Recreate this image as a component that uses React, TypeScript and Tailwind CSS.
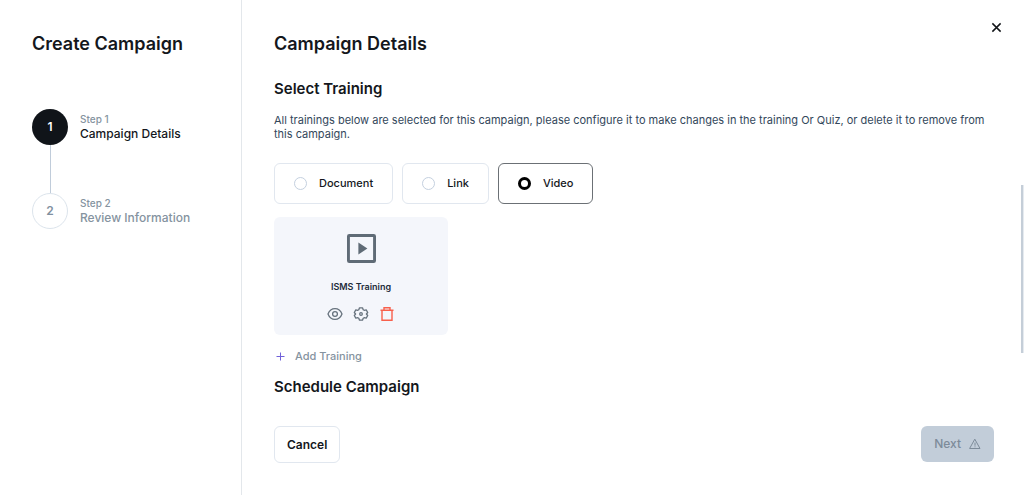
import { useState } from "react";

const steps = [
  { id: 1, label: "Step 1", title: "Campaign Details" },
  { id: 2, label: "Step 2", title: "Review Information" },
];

const kinds = ["Document", "Link", "Video"];

function VideoIcon() {
  return (
    <svg className="size-[29px]" viewBox="0 0 28 28" fill="none" aria-hidden="true">
      <rect x="1.4" y="1.4" width="25.2" height="25.2" rx="0.8" stroke="#5f6b76" strokeWidth="2.8" />
      <path d="M11 8.300v11.400l8.700-5.700z" fill="#5f6b76" />
    </svg>
  );
}

function EyeIcon() {
  return (
    <svg className="h-4 w-4" viewBox="0 0 16 16" fill="none" stroke="#66727d" strokeWidth="1.3" aria-hidden="true">
      <path d="M1 8C2.300 4.600 5 2.600 8 2.600s5.700 2 7 5.400c-1.300 3.400-4 5.400-7 5.400S2.300 11.400 1 8z" strokeLinejoin="round" />
      <circle cx="8" cy="8" r="2.400" />
    </svg>
  );
}

function GearIcon() {
  return (
    <svg className="h-4 w-4" viewBox="0 0 16 16" fill="none" stroke="#66727d" strokeWidth="1.300" strokeLinejoin="round" aria-hidden="true">
      <path d="M6.500 1.800h3l.7 1.900 1 .6 2-.4 1.500 2.600L13.400 8l1.300 1.500-1.500 2.600-2-.4-1 .6-.7 1.900h-3l-.7-1.900-1-.6-2 .4-1.500-2.600L2.600 8 1.300 6.500l1.500-2.600 2 .4 1-.6z" />
      <circle cx="8" cy="8" r="1.300" />
    </svg>
  );
}

function TrashIcon() {
  return (
    <svg className="h-4 w-4" viewBox="0 0 16 16" fill="none" stroke="#f8604c" strokeWidth="1.400" aria-hidden="true">
      <path d="M1.500 4.200h13M5 4.200V1.700h6v2.500M3 4.200v10.100h10V4.200" />
    </svg>
  );
}

export default function App() {
  const [kind, setKind] = useState("Video");

  return (
    <div className="flex min-h-screen bg-white font-['Inter',sans-serif] text-[#14171c]">
      <aside className="w-[242px] shrink-0 border-r border-[#e3e7eb] pl-8 pt-8">
        <h1 className="text-lg leading-6 font-semibold">Create Campaign</h1>
        <ol className="mt-[53px]">
          {steps.map((step, i) => (
            <li key={step.id} className="flex gap-3">
              <div className="flex flex-col items-center">
                <span
                  className={
                    i === 0
                      ? "flex size-9 items-center justify-center rounded-full bg-[#101419] text-xs font-semibold text-white"
                      : "flex size-9 items-center justify-center rounded-full border border-[#dce4ec] text-xs font-semibold text-[#8190a0]"
                  }
                >
                  {step.id}
                </span>
                {i === 0 && <span className="h-12 w-px bg-[#c0ccda]" />}
              </div>
              <div className="pt-1">
                <p className="text-[10px] leading-3 font-medium text-[#8593a0]">{step.label}</p>
                <p className={i === 0 ? "text-xs leading-[18px] font-medium" : "text-xs leading-[18px] font-medium text-[#8593a0]"}>
                  {step.title}
                </p>
              </div>
            </li>
          ))}
        </ol>
      </aside>

      <main className="relative flex min-w-0 flex-1 flex-col pl-8 pt-8 pr-[30px]">
        <header className="flex items-start justify-between">
          <h2 className="text-lg leading-6 font-semibold">Campaign Details</h2>
          <button type="button" aria-label="Close" className="-mt-[13px] -mr-[10px] flex size-4 items-center justify-center">
            <svg className="size-[11px]" viewBox="0 0 12 12" stroke="#111418" strokeWidth="1.600" aria-hidden="true">
              <path d="M1.500 1.500l9 9M10.500 1.500l-9 9" />
            </svg>
          </button>
        </header>

        <section className="mt-[23px]">
          <h3 className="text-[15px] leading-5 font-semibold">Select Training</h3>
          <p className="mt-[14px] text-[11px] leading-[14px] text-[#33475b]">
            All trainings below are selected for this campaign, please configure it to make changes in the training Or
            Quiz, or delete it to remove from this campaign.
          </p>

          <div className="mt-[22px] flex gap-[9px]" role="radiogroup" aria-label="Training type">
            {kinds.map((name) => (
              <label
                key={name}
                className="flex h-[41px] items-center gap-3 rounded-md border border-[#e1e7ef] px-[19px] text-[11px] font-medium has-checked:border-[#6b7075]"
              >
                <input
                  type="radio"
                  name="kind"
                  value={name}
                  checked={kind === name}
                  onChange={() => setKind(name)}
                  className="size-[13px] appearance-none rounded-full border border-[#c4d0df] bg-white checked:border-3 checked:border-black"
                />
                {name}
              </label>
            ))}
          </div>

          <article className="mt-[13px] flex h-[118px] w-[174px] flex-col items-center rounded-md bg-[#f4f6fb] pt-[17px]">
            <VideoIcon />
            <h4 className="mt-[18px] text-[9px] leading-3 font-semibold text-[#1d2b3a]">ISMS Training</h4>
            <div className="mt-[13px] flex gap-[10px]">
              <button type="button" aria-label="Preview training"><EyeIcon /></button>
              <button type="button" aria-label="Configure training"><GearIcon /></button>
              <button type="button" aria-label="Delete training"><TrashIcon /></button>
            </div>
          </article>

          <button type="button" className="mt-[13px] flex items-center gap-[10px] pl-[2px] text-[11px] leading-4 font-medium text-[#8593a0]">
            <svg className="size-[9px]" viewBox="0 0 9 9" stroke="#7161d9" strokeWidth="1" aria-hidden="true">
              <path d="M4.500 0.500v8M0.500 4.500h8" />
            </svg>
            Add Training
          </button>
        </section>

        <h3 className="mt-[13px] text-[15px] leading-5 font-semibold">Schedule Campaign</h3>

        <footer className="mt-[29px] flex justify-between pb-8">
          <button type="button" className="h-[37px] rounded-md border border-[#e1e7ef] px-3 text-xs font-semibold">
            Cancel
          </button>
          <button type="button" disabled className="flex h-9 items-center gap-2 rounded-md bg-[#c2cdd9] px-[13px] text-xs font-medium text-[#7d8b99]">
            Next
            <svg className="size-3" viewBox="0 0 12 12" fill="none" stroke="currentColor" strokeLinejoin="round" strokeLinecap="round" aria-hidden="true">
              <path d="M6 1.500l5 9H1zM6 5v2.300M6 8.800v.1" />
            </svg>
          </button>
        </footer>

        <div className="absolute top-[185px] right-0 h-[168px] w-[3px] border-r border-[#e6ebf0] bg-[#c5ced8]" aria-hidden="true" />
      </main>
    </div>
  );
}
